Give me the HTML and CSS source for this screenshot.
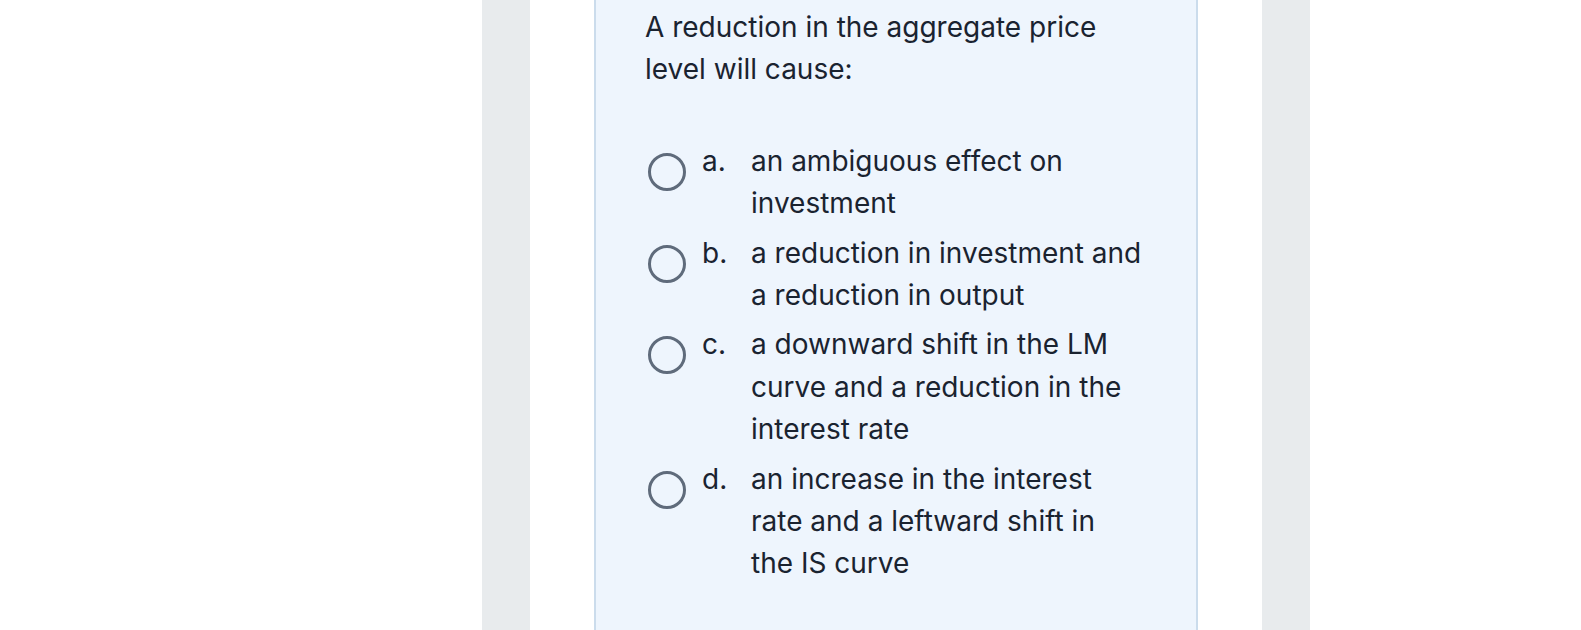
FILE: index.html
```html
<!DOCTYPE html>
<html lang="en">
<head>
<meta charset="utf-8">
<title>Question</title>
<link rel="stylesheet" href="styles.css">
</head>
<body>
<div class="page">
  <div class="rail">
    <div class="sheet">
      <div class="question-box">
        <p class="question">A reduction in the aggregate price level will cause:</p>
        <ul class="options">
          <li class="option">
            <span class="radio"></span>
            <span class="letter">a.</span>
            <span class="answer">an ambiguous effect on investment</span>
          </li>
          <li class="option">
            <span class="radio"></span>
            <span class="letter">b.</span>
            <span class="answer">a reduction in investment and a reduction in output</span>
          </li>
          <li class="option">
            <span class="radio"></span>
            <span class="letter">c.</span>
            <span class="answer">a downward shift in the LM curve and a reduction in the interest rate</span>
          </li>
          <li class="option">
            <span class="radio"></span>
            <span class="letter">d.</span>
            <span class="answer">an increase in the interest rate and a leftward shift in the&nbsp;IS curve</span>
          </li>
        </ul>
      </div>
    </div>
  </div>
</div>
</body>
</html>
```

FILE: styles.css
```css
html, body {
  margin: 0;
  padding: 0;
  background: #ffffff;
  height: 100%;
  overflow: hidden;
}

.page {
  display: flex;
  justify-content: center;
  min-height: 630px;
  height: 100%;
  padding-left: 211px;
}

.rail {
  width: 828px;
  box-sizing: border-box;
  padding: 0 48px;
  background: #e8ebed;
  display: flex;
}

.sheet {
  flex: 1;
  background: #ffffff;
  padding: 0 64px;
  display: flex;
}

.question-box {
  flex: 1;
  background: #eef5fd;
  border-left: 2px solid #cbdcec;
  border-right: 2px solid #cbdcec;
  padding: 6px 49px 0 49px;
  font-family: Inter, "Noto Sans", sans-serif;
  font-size: 28px;
  line-height: 42.4px;
  color: #1a2330;
}

.question {
  margin: 0 0 49px 0;
}

.options {
  list-style: none;
  margin: 0;
  padding: 0;
  display: flex;
  flex-direction: column;
  gap: 7px;
}

.option {
  display: flex;
  align-items: flex-start;
}

.radio {
  flex: 0 0 auto;
  width: 38px;
  height: 38px;
  box-sizing: border-box;
  border: 3px solid #5f6b7b;
  border-radius: 50%;
  margin: 13px 16px 0 3px;
}

.letter {
  flex: 0 0 49px;
}

.answer {
  flex: 1;
}
```
